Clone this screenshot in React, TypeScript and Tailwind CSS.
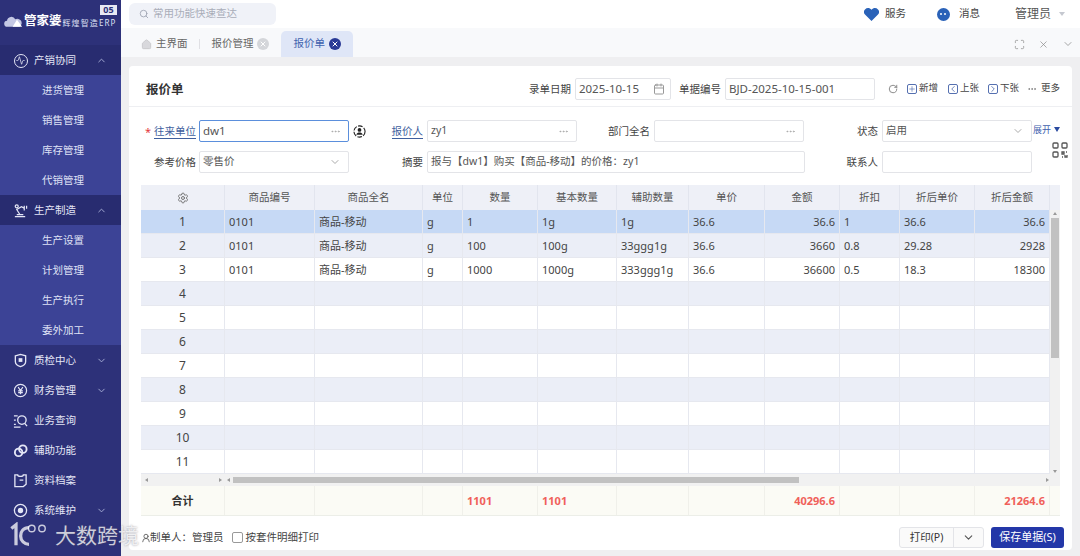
import {
  Activity,
  Calendar,
  ChevronDown,
  ChevronLeft,
  ChevronRight,
  ChevronUp,
  Ellipsis,
  House,
  Maximize,
  Plus,
  RotateCw,
  Search,
  Settings,
  UserRound,
  X,
} from "lucide-react";

const columns = ["商品编号", "商品全名", "单位", "数量", "基本数量", "辅助数量", "单价", "金额", "折扣", "折后单价", "折后金额"];

const rows = [
  ["0101", "商品-移动", "g", "1", "1g", "1g", "36.6", "36.6", "1", "36.6", "36.6"],
  ["0101", "商品-移动", "g", "100", "100g", "33ggg1g", "36.6", "3660", "0.8", "29.28", "2928"],
  ["0101", "商品-移动", "g", "1000", "1000g", "333ggg1g", "36.6", "36600", "0.5", "18.3", "18300"],
];

const bodyCols = "grid grid-cols-[84px_90px_108px_40px_75px_79px_72px_76px_75px_60px_75px_75px]";
const fullCols = "grid grid-cols-[84px_90px_108px_40px_75px_79px_72px_76px_75px_60px_75px_75px_10px]";

const SubItem = ({ label }: { label: string }) => (
  <div className="h-[30px] pl-[42px] pt-[1px] flex items-center text-[10.5px] text-[#dfe1f5]">{label}</div>
);

const MenuItem = ({
  label,
  icon,
  arrow,
  active,
}: {
  label: string;
  icon: React.ReactNode;
  arrow?: "up" | "down";
  active?: boolean;
}) => (
  <div className={`h-[30px] pl-[13px] pr-[14px] pt-[1px] flex items-center text-[10.5px] text-[#e4e6f6] ${active ? "bg-[#282c70]" : ""}`}>
    <span className="w-[15px] h-[15px] flex items-center justify-center text-[#e4e6f6]">{icon}</span>
    <span className="ml-[6px] flex-1">{label}</span>
    {arrow === "up" && <ChevronUp size={11} className="text-[#aab0d8]" />}
    {arrow === "down" && <ChevronDown size={11} className="text-[#aab0d8]" />}
  </div>
);

const RobotIcon = () => (
  <svg viewBox="0 0 16 16" width="15" height="15" fill="none" stroke="currentColor" strokeWidth="1.3">
    <path d="M2 14.5h11M4 12.5h7M7.5 12.5 4 7l5-3 3 1.5" />
    <circle cx="4" cy="3.5" r="1.6" />
    <path d="M12 3v5M14.5 3v3" />
  </svg>
);

const ShieldIcon = () => (
  <svg viewBox="0 0 16 16" width="15" height="15" fill="none" stroke="currentColor" strokeWidth="1.4">
    <path d="M2.5 3 8 1.500 13.500 3v6c0 3-3 4.800-5.500 5.500C5.500 13.800 2.500 12 2.500 9z" />
    <rect x="6" y="5.500" width="4" height="4" fill="currentColor" stroke="none" />
  </svg>
);

const YenIcon = () => (
  <svg viewBox="0 0 16 16" width="15" height="15" fill="none" stroke="currentColor" strokeWidth="1.3">
    <circle cx="8" cy="8" r="6.500" />
    <path d="m5.500 4.500 2.500 3.500 2.500-3.500M8 8v4M5.500 8.500h5M5.500 10.300h5" />
  </svg>
);

const QueryIcon = () => (
  <svg viewBox="0 0 16 16" width="16" height="16" fill="none" stroke="currentColor" strokeWidth="1.4">
    <circle cx="9.500" cy="7" r="4.500" />
    <path d="m12.500 10.500 2.500 3M1 2.500h4M1 7h2M1 11.500h2M1 14.500h7" />
  </svg>
);

const RingsIcon = () => (
  <svg viewBox="0 0 16 16" width="16" height="16" fill="none" stroke="currentColor" strokeWidth="2">
    <circle cx="6" cy="9.500" r="4" />
    <circle cx="10.500" cy="6" r="4" />
  </svg>
);

const FolderIcon = () => (
  <svg viewBox="0 0 16 16" width="15" height="15" fill="none" stroke="currentColor" strokeWidth="1.4">
    <path d="M2 2h3c0 2 6 2 6 0h3v10l-3 2.500H2zM7 7.500h4" />
  </svg>
);

const GearRingIcon = () => (
  <svg viewBox="0 0 16 16" width="15" height="15" fill="none" stroke="currentColor" strokeWidth="1.4">
    <circle cx="8" cy="8" r="6.500" />
    <circle cx="8" cy="8" r="2.200" fill="currentColor" />
  </svg>
);

const CloudLogo = () => (
  <svg viewBox="0 0 22 12" width="19" height="11" className="shrink-0">
    <path d="M4 12a3.500 3.500 0 0 1-.5-7A5 5 0 0 1 13 3.500 4 4 0 0 1 18 12z" fill="#c4c8e4" />
    <path d="M10 12 15 4l6 8z" fill="#ffffff" />
  </svg>
);

const PickIcon = () => (
  <svg viewBox="0 0 14 14" width="13" height="13" fill="none" className="text-[#222]">
    <circle cx="7" cy="7" r="6" stroke="currentColor" strokeWidth="1.200" strokeDasharray="5 1.500" />
    <circle cx="7" cy="5.300" r="2" fill="currentColor" />
    <path d="M3.500 10.500c.5-2 2-2.500 3.500-2.500s3 .5 3.500 2.500z" fill="currentColor" />
  </svg>
);

const Field = ({
  value,
  focus,
  dots,
  chevron,
  className,
}: {
  value?: string;
  focus?: boolean;
  dots?: boolean;
  chevron?: boolean;
  className?: string;
}) => (
  <div
    className={`h-[22px] flex items-center justify-between pl-[3px] pr-[4px] bg-white rounded-[2px] border text-[10.5px] text-[#555] ${
      focus ? "border-[#5b8fdc]" : "border-[#e3e4e8]"
    } ${className ?? ""}`}
  >
    <span className={focus ? "text-[11.5px]" : ""}>{value}</span>
    {dots && <Ellipsis size={11} className="text-[#aaa] mr-[3px]" />}
    {chevron && <ChevronDown size={12} className="text-[#aaa] mr-[3px]" />}
  </div>
);

const Label = ({ text, link }: { text: string; link?: boolean }) => (
  <span
    className={
      link
        ? "text-[10.5px] leading-[14px] text-[#3f5f9e] border-b border-[#3f5f9e]"
        : "text-[10.5px] leading-[14px] text-[#444]"
    }
  >
    {text}
  </span>
);

const ToolBtn = ({ icon, text }: { icon: React.ReactNode; text: string }) => (
  <span className="flex items-center text-[9.5px] text-[#444]">
    <span className="w-[10px] h-[10px] flex items-center justify-center border border-[#5570b0] rounded-[2px] text-[#5570b0]">
      {icon}
    </span>
    <span className="ml-[2px]">{text}</span>
  </span>
);

const App = () => {
  return (
    <div className="relative w-[1080px] h-[556px] overflow-hidden flex bg-[#efeff1] font-['Noto_Sans','Noto_Sans_CJK_SC',sans-serif]">
      {/* sidebar */}
      <aside className="w-[121px] shrink-0 bg-[#2d3179] flex flex-col">
        <div className="relative h-[45px] pl-[4px] pb-[2px] flex items-center text-white">
          <CloudLogo />
          <span className="ml-[1px] text-[12.5px] font-bold leading-none whitespace-nowrap">管家婆</span>
          <span className="ml-[1px] mt-[3px] text-[8px] tracking-[1.1px] text-[#dfe1f5] leading-none whitespace-nowrap">辉煌智造ERP</span>
          <span className="absolute left-[100px] top-[5px] w-[17px] h-[10px] bg-[#e8e9f3] text-[#2d3179] text-[9px] font-bold leading-[10px] text-center">
            05
          </span>
        </div>
        <MenuItem label="产销协同" active arrow="up" icon={<span className="w-[14px] h-[14px] rounded-full border border-[#e4e6f6] flex items-center justify-center"><Activity size={9} /></span>} />
        <div className="bg-[#3c4396]">
          <SubItem label="进货管理" />
          <SubItem label="销售管理" />
          <SubItem label="库存管理" />
          <SubItem label="代销管理" />
        </div>
        <MenuItem label="生产制造" active arrow="up" icon={<RobotIcon />} />
        <div className="bg-[#3c4396]">
          <SubItem label="生产设置" />
          <SubItem label="计划管理" />
          <SubItem label="生产执行" />
          <SubItem label="委外加工" />
        </div>
        <MenuItem label="质检中心" arrow="down" icon={<ShieldIcon />} />
        <MenuItem label="财务管理" arrow="down" icon={<YenIcon />} />
        <MenuItem label="业务查询" icon={<QueryIcon />} />
        <MenuItem label="辅助功能" icon={<RingsIcon />} />
        <MenuItem label="资料档案" icon={<FolderIcon />} />
        <MenuItem label="系统维护" arrow="down" icon={<GearRingIcon />} />
      </aside>

      <main className="flex-1 min-w-0 flex flex-col">
        {/* top bar */}
        <header className="h-[28px] bg-white flex items-center pl-[8px] pr-[15px]">
          <div className="w-[147px] h-[22px] rounded-[6px] bg-[#f0f2f8] flex items-center pl-[10px] text-[10.5px] text-[#a9adb8]">
            <Search size={10} className="text-[#9aa0ae]" />
            <span className="ml-[4px]">常用功能快速查达</span>
          </div>
          <div className="ml-auto flex items-center text-[10.5px] text-[#444]">
            <svg viewBox="0 0 16 14" width="15" height="13" className="text-[#2a62b8]">
              <path d="M8 14 1 7a4 4 0 0 1 0-5.500C3-.500 6-.500 8 2c2-2.500 5-2.500 7-.5a4 4 0 0 1 0 5.500z" fill="currentColor" />
            </svg>
            <span className="ml-[6px]">服务</span>
            <span className="ml-[31px] w-[13px] h-[13px] rounded-full bg-[#2a62b8] flex items-center justify-center gap-[2px]">
              <span className="w-[2px] h-[2px] bg-white rounded-full" />
              <span className="w-[2px] h-[2px] bg-white rounded-full" />
            </span>
            <span className="ml-[9px]">消息</span>
            <span className="ml-[35px] text-[12px] text-[#555]">管理员</span>
            <span className="ml-[8px] w-0 h-0 border-x-[3px] border-x-transparent border-t-[4px] border-t-[#c5c8d0]" />
          </div>
        </header>

        {/* tabs */}
        <div className="h-[29px] bg-[#f8f9fb] flex items-end pl-[20px] pr-[6px]">
          <div className="h-[26px] flex items-center text-[10.5px] text-[#666]">
            <House size={11} className="text-[#c8c8cc] fill-[#d8d8dc]" />
            <span className="ml-[4px]">主界面</span>
            <span className="w-px h-[10px] bg-[#e0e0e4] ml-[11px] mr-[12px]" />
            <span>报价管理</span>
            <span className="ml-[3px] w-[12px] h-[12px] rounded-full bg-[#d4d6da] flex items-center justify-center">
              <X size={8} strokeWidth={3} className="text-white" />
            </span>
          </div>
          <div className="ml-[12px] w-[72px] h-[26px] rounded-t-[5px] bg-[#dfe6f7] flex items-center pl-[13px] text-[10.5px] text-[#3e62ae]">
            <span>报价单</span>
            <span className="ml-[4px] w-[12px] h-[12px] rounded-full bg-[#2a3a96] flex items-center justify-center">
              <X size={8} strokeWidth={3} className="text-white" />
            </span>
          </div>
          <div className="ml-auto h-[26px] flex items-center gap-[13px] text-[#888]">
            <Maximize size={11} strokeWidth={1.5} />
            <X size={11} strokeWidth={1.5} />
            <ChevronDown size={12} strokeWidth={1.5} />
          </div>
        </div>

        {/* card */}
        <section className="relative mt-[9px] ml-[8px] w-[943px] h-[484px] bg-white rounded-[4px] flex flex-col">
          <div className="h-[41px] shrink-0 pt-[5px] border-b border-[#eeeff2] flex items-center pl-[17px] pr-[12px]">
            <h1 className="text-[12.5px] font-bold text-[#333] mt-[3px]">报价单</h1>
            <span className="ml-auto flex items-center"><Label text="录单日期" /></span>
            <div className="ml-[4px] w-[96px] h-[22px] border border-[#e3e4e8] rounded-[2px] flex items-center justify-between px-[3px] text-[11.5px] text-[#555]">
              2025-10-15
              <Calendar size={12} className="text-[#999] mr-[2px]" />
            </div>
            <span className="ml-[8px] flex items-center"><Label text="单据编号" /></span>
            <div className="ml-[4px] w-[150px] h-[22px] border border-[#e3e4e8] rounded-[2px] flex items-center px-[3px] text-[11.5px] text-[#555]">
              BJD-2025-10-15-001
            </div>
            <RotateCw size={10} className="ml-[13px] text-[#777]" />
            <span className="ml-[9px]"><ToolBtn icon={<Plus size={8} className="shrink-0" />} text="新增" /></span>
            <span className="ml-[10px]"><ToolBtn icon={<ChevronLeft size={10} className="shrink-0 -m-[1px]" />} text="上张" /></span>
            <span className="ml-[9px]"><ToolBtn icon={<ChevronRight size={10} className="shrink-0 -m-[1px]" />} text="下张" /></span>
            <span className="ml-[8px] flex items-center gap-[4px] text-[9.5px] text-[#444]">
              <Ellipsis size={10} className="text-[#777]" />
              更多
            </span>
          </div>

          {/* form */}
          <div className="mt-[13px] grid grid-cols-[70px_150px_78px_150px_77px_150px_78px_150px] grid-rows-[22px_22px] gap-y-[9px] items-center">
            <div className="flex justify-end items-center pr-[3px] leading-none">
              <span className="text-[11px] text-[#e4393c] mr-[3px]">*</span>
              <Label text="往来单位" link />
            </div>
            <Field value="dw1" focus dots />
            <div className="flex items-center justify-between pl-[4px] pr-[4px] leading-none">
              <PickIcon />
              <Label text="报价人" link />
            </div>
            <Field value="zy1" dots />
            <div className="flex justify-end items-center pr-[4px]"><Label text="部门全名" /></div>
            <Field dots />
            <div className="flex justify-end items-center pr-[4px]"><Label text="状态" /></div>
            <div className="relative">
              <Field value="启用" chevron />
              <span className="absolute left-[151px] top-[3px] flex items-center gap-[3px] text-[9px] text-[#3f5fae] whitespace-nowrap">
                展开
                <span className="w-0 h-0 border-x-[3.5px] border-x-transparent border-t-[5px] border-t-[#2a4aa0]" />
              </span>
            </div>

            <div className="flex justify-end items-center pr-[3px]"><Label text="参考价格" /></div>
            <Field value="零售价" chevron />
            <div className="flex justify-end items-center pr-[4px]"><Label text="摘要" /></div>
            <Field value="报与【dw1】购买【商品-移动】的价格：zy1" className="col-span-3 w-[378px]" />
            <div className="flex justify-end items-center pr-[4px]"><Label text="联系人" /></div>
            <Field />
          </div>

          {/* qr shortcut */}
          <svg viewBox="0 0 16 16" width="16" height="16" fill="none" stroke="#555" strokeWidth="1.3" className="absolute left-[923px] top-[76px]">
            <rect x="1" y="1" width="5" height="5" rx="1" />
            <rect x="10" y="1" width="5" height="5" rx="1" />
            <rect x="1" y="10" width="5" height="5" rx="1" />
            <path d="M10 10h2v2h-2zM14 10h1M10 15h1M13 13v2h2v-2" />
          </svg>

          {/* table */}
          <div className="mt-[12px] ml-[12px] w-[919px] text-[11px] text-[#444]">
            <div className={`${fullCols} h-[25px] bg-[#eef0f7] text-[#555]`}>
              <div className="flex items-center justify-center border-r border-[#e2e5ee]">
                <Settings size={12} className="text-[#777]" />
              </div>
              {columns.map((c) => (
                <div key={c} className="flex items-center justify-center border-r border-[#e2e5ee] text-[10.5px]">
                  {c}
                </div>
              ))}
              <div />
            </div>

            <div className="relative">
              {Array.from({ length: 11 }).map((_, i) => {
                const row = rows[i];
                const bg = i === 0 ? "bg-[#c6d9f5]" : i % 2 === 1 ? "bg-[#ebeef7]" : "bg-white";
                return (
                  <div key={i} className={`${bodyCols} w-[909px] h-[24px] ${bg}`}>
                    <div className="flex items-center justify-center pt-[1px] border-r border-b border-[#e6e8ef] text-[12px]">{i + 1}</div>
                    {columns.map((_c, j) => (
                      <div
                        key={j}
                        className={`flex items-center px-[4px] pt-[1px] border-r border-b border-[#e6e8ef] ${
                          j === 7 || j === 10 ? "justify-end" : ""
                        }`}
                      >
                        {row?.[j]}
                      </div>
                    ))}
                  </div>
                );
              })}
              {/* vertical scrollbar */}
              <div className="absolute right-0 top-0 w-[10px] h-[264px] bg-[#f1f1f1]">
                <div className="absolute left-[1px] top-[8px] w-[8px] h-[140px] bg-[#c1c1c1]" />
                <span className="absolute left-[3px] top-[2px] w-0 h-0 border-x-[2px] border-x-transparent border-b-[3px] border-b-[#999]" />
                <span className="absolute left-[3px] bottom-[1px] w-0 h-0 border-x-[2px] border-x-transparent border-t-[3px] border-t-[#999]" />
              </div>
            </div>

            {/* horizontal scrollbar */}
            <div className="relative h-[12px] bg-[#f1f1f1] flex items-center">
              <div className="w-[84px] h-full" />
              <div className="flex-1 h-full pl-[8px] pr-[261px] py-[3px]">
                <div className="h-full bg-[#c1c1c1]" />
              </div>
              <span className="absolute left-[4px] top-[4px] w-0 h-0 border-y-[2px] border-y-transparent border-r-[3px] border-r-[#999]" />
              <span className="absolute left-[78px] top-[4px] w-0 h-0 border-y-[2px] border-y-transparent border-l-[3px] border-l-[#999]" />
              <span className="absolute left-[86px] top-[4px] w-0 h-0 border-y-[2px] border-y-transparent border-r-[3px] border-r-[#999]" />
              <span className="absolute left-[905px] top-[4px] w-0 h-0 border-y-[2px] border-y-transparent border-l-[3px] border-l-[#999]" />
            </div>

            {/* totals */}
            <div className={`${fullCols} h-[30px] bg-[#fbfbf5] font-bold text-[#f0605a] border-b border-[#eceee8]`}>
              <div className="flex items-center justify-center pt-[1px] border-r border-[#f0f0ea] text-[#333]">合计</div>
              {columns.map((c, j) => (
                <div key={c} className={`flex items-center px-[4px] pt-[1px] border-r border-[#f0f0ea] ${j === 7 || j === 10 ? "justify-end" : ""}`}>
                  {j === 3 || j === 4 ? "1101" : j === 7 ? "40296.6" : j === 10 ? "21264.6" : ""}
                </div>
              ))}
              <div />
            </div>
          </div>

          {/* footer */}
          <div className="mt-[11px] ml-[12px] mr-[8px] flex items-center text-[10.5px] text-[#444]">
            <UserRound size={10} className="text-[#555]" />
            <span className="ml-[-1px]">制单人：管理员</span>
            <span className="ml-[8px] w-[11px] h-[11px] border border-[#999] rounded-[2px] bg-white" />
            <span className="ml-[3px]">按套件明细打印</span>
            <div className="ml-auto flex h-[21px] w-[85px] border border-[#e3e4e8] rounded-[3px] bg-[#fafafa]">
              <span className="w-[54px] flex items-center justify-center border-r border-[#e3e4e8] text-[#333]">打印(P)</span>
              <span className="flex-1 flex items-center justify-center text-[#555]"><ChevronDown size={13} /></span>
            </div>
            <button className="ml-[7px] w-[73px] h-[21px] rounded-[3px] bg-[#2337a8] text-white text-[11px]">保存单据(S)</button>
          </div>
        </section>
      </main>

      {/* watermark */}
      <div className="absolute left-[7px] top-[522px] flex items-center text-white/75 pointer-events-none [text-shadow:0_0_2px_rgba(80,80,100,0.6)]">
        <svg viewBox="0 0 44 28" width="44" height="26" fill="none" stroke="currentColor">
          <path d="M3 7 8 3v22" strokeWidth="3.5" />
          <path d="M22 6C16 6 13 10 13 15s4 9 9 9" strokeWidth="3.5" />
          <circle cx="25" cy="7" r="3.5" strokeWidth="1.5" />
          <circle cx="36" cy="7" r="3.5" strokeWidth="1.5" />
        </svg>
        <span className="ml-[4px] text-[21px] leading-none whitespace-nowrap">大数跨境</span>
      </div>
    </div>
  );
};

export default App;
